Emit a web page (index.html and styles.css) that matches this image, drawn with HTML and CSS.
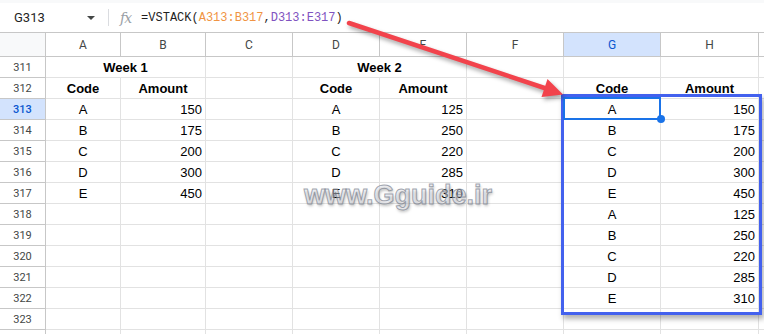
FILE: index.html
```html
<!DOCTYPE html>
<html>
<head>
<meta charset="utf-8">
<link rel="stylesheet" href="styles.css">
</head>
<body>
<div class="page">
  <div class="topband"></div>
  <div class="fbar">
    <div class="namebox">G313</div>
    <div class="caret"></div>
    <div class="sep"></div>
    <div class="fx">fx</div>
    <div class="formula">=VSTACK(<span class="ref1">A313:B317</span>,<span class="ref2">D313:E317</span>)</div>
  </div>
  <div class="sheet">
    <div class="ch corner"></div>
    <div class="ch">A</div><div class="ch">B</div><div class="ch">C</div><div class="ch">D</div>
    <div class="ch">E</div><div class="ch">F</div><div class="ch sel">G</div><div class="ch">H</div><div class="ch last"></div>

    <div class="rh">311</div>
    <div class="c ctr b span2">Week 1</div><div class="c"></div>
    <div class="c ctr b span2">Week 2</div><div class="c"></div><div class="c"></div><div class="c"></div><div class="c last"></div>

    <div class="rh">312</div>
    <div class="c ctr b">Code</div><div class="c ctr b">Amount</div><div class="c"></div>
    <div class="c ctr b">Code</div><div class="c ctr b">Amount</div><div class="c"></div>
    <div class="c ctr b">Code</div><div class="c ctr b">Amount</div><div class="c last"></div>

    <div class="rh sel">313</div>
    <div class="c ctr">A</div><div class="c num">150</div><div class="c"></div>
    <div class="c ctr">A</div><div class="c num">125</div><div class="c"></div>
    <div class="c ctr">A</div><div class="c num">150</div><div class="c last"></div>

    <div class="rh">314</div>
    <div class="c ctr">B</div><div class="c num">175</div><div class="c"></div>
    <div class="c ctr">B</div><div class="c num">250</div><div class="c"></div>
    <div class="c ctr">B</div><div class="c num">175</div><div class="c last"></div>

    <div class="rh">315</div>
    <div class="c ctr">C</div><div class="c num">200</div><div class="c"></div>
    <div class="c ctr">C</div><div class="c num">220</div><div class="c"></div>
    <div class="c ctr">C</div><div class="c num">200</div><div class="c last"></div>

    <div class="rh">316</div>
    <div class="c ctr">D</div><div class="c num">300</div><div class="c"></div>
    <div class="c ctr">D</div><div class="c num">285</div><div class="c"></div>
    <div class="c ctr">D</div><div class="c num">300</div><div class="c last"></div>

    <div class="rh">317</div>
    <div class="c ctr">E</div><div class="c num">450</div><div class="c"></div>
    <div class="c ctr">E</div><div class="c num">310</div><div class="c"></div>
    <div class="c ctr">E</div><div class="c num">450</div><div class="c last"></div>

    <div class="rh">318</div>
    <div class="c"></div><div class="c"></div><div class="c"></div><div class="c"></div><div class="c"></div><div class="c"></div>
    <div class="c ctr">A</div><div class="c num">125</div><div class="c last"></div>

    <div class="rh">319</div>
    <div class="c"></div><div class="c"></div><div class="c"></div><div class="c"></div><div class="c"></div><div class="c"></div>
    <div class="c ctr">B</div><div class="c num">250</div><div class="c last"></div>

    <div class="rh">320</div>
    <div class="c"></div><div class="c"></div><div class="c"></div><div class="c"></div><div class="c"></div><div class="c"></div>
    <div class="c ctr">C</div><div class="c num">220</div><div class="c last"></div>

    <div class="rh">321</div>
    <div class="c"></div><div class="c"></div><div class="c"></div><div class="c"></div><div class="c"></div><div class="c"></div>
    <div class="c ctr">D</div><div class="c num">285</div><div class="c last"></div>

    <div class="rh">322</div>
    <div class="c"></div><div class="c"></div><div class="c"></div><div class="c"></div><div class="c"></div><div class="c"></div>
    <div class="c ctr">E</div><div class="c num">310</div><div class="c last"></div>

    <div class="rh">323</div>
    <div class="c"></div><div class="c"></div><div class="c"></div><div class="c"></div><div class="c"></div><div class="c"></div>
    <div class="c"></div><div class="c"></div><div class="c last"></div>

    <div class="rh"></div>
    <div class="c"></div><div class="c"></div><div class="c"></div><div class="c"></div><div class="c"></div><div class="c"></div>
    <div class="c"></div><div class="c"></div><div class="c last"></div>
  </div>

  <div class="selrange"></div>
  <div class="active"></div>
  <div class="handle"></div>
  <div class="watermark">www.Gguide.ir</div>
  <svg class="arrow" width="764" height="334" viewBox="0 0 764 334">
    <line x1="349" y1="23" x2="546" y2="88.5" stroke="#f2434c" stroke-width="4.5" stroke-linecap="round"/>
    <polygon points="563,94.5 541.5,97 547.5,79" fill="#f2434c"/>
  </svg>
</div>
</body>
</html>
```
FILE: styles.css
```css
html, body {
  margin: 0;
  padding: 0;
  background: #ffffff;
}
.page {
  position: relative;
  width: 764px;
  height: 334px;
  overflow: hidden;
  font-family: "Liberation Sans", Arial, sans-serif;
}
.topband {
  height: 3px;
  background: #f8f9fa;
}
.fbar {
  height: 29px;
  border-bottom: 1px solid #c7c7c7;
  display: flex;
  align-items: center;
  box-sizing: content-box;
}
.namebox {
  font-family: "Roboto", "Liberation Sans", sans-serif;
  font-size: 13px;
  color: #1f1f1f;
  margin-left: 14px;
  width: 72px;
}
.caret {
  width: 0;
  height: 0;
  border-left: 4px solid transparent;
  border-right: 4px solid transparent;
  border-top: 4px solid #444746;
  margin-left: 1px;
}
.sep {
  width: 1px;
  height: 17px;
  background: #dadce0;
  margin-left: 13px;
}
.fx {
  font-family: "DejaVu Serif", "Liberation Serif", serif;
  font-style: italic;
  font-size: 14px;
  color: #9aa0a6;
  margin-left: 11px;
  letter-spacing: -1px;
}
.formula {
  font-family: "Liberation Mono", "DejaVu Sans Mono", monospace;
  font-size: 12px;
  color: #1f1f1f;
  margin-left: 10px;
}
.ref1 { color: #f09443; }
.ref2 { color: #8053c0; }

.sheet {
  display: grid;
  grid-template-columns: 46px 75px 85px 87px 87px 87px 97px 97px 98px 5px;
  grid-auto-rows: 21px;
  grid-template-rows: 24px;
}
.ch {
  box-sizing: border-box;
  border-right: 1px solid #c7c7c7;
  border-bottom: 1px solid #c7c7c7;
  display: flex;
  align-items: center;
  justify-content: center;
  font-family: "Roboto", "Liberation Sans", sans-serif;
  font-size: 12px;
  color: #444746;
  background: #ffffff;
}
.ch.corner { background: #f8f9fa; }
.ch.sel { background: #d3e3fd; color: #0b57d0; }
.ch.last { border-right: none; }
.rh {
  box-sizing: border-box;
  border-right: 1px solid #c7c7c7;
  border-bottom: 1px solid #c7c7c7;
  display: flex;
  align-items: center;
  justify-content: center;
  font-family: "Roboto", "Liberation Sans", sans-serif;
  font-size: 11px;
  color: #444746;
  background: #ffffff;
}
.rh.sel { background: #d3e3fd; color: #0b57d0; font-weight: 500; }
.c {
  box-sizing: border-box;
  border-right: 1px solid #e2e2e2;
  border-bottom: 1px solid #e2e2e2;
  display: flex;
  align-items: center;
  padding: 0 3px;
  font-size: 13px;
  color: #000000;
  white-space: nowrap;
}
.c.last { border-right: none; }
.ctr { justify-content: center; }
.num { justify-content: flex-end; }
.b { font-weight: bold; }
.span2 { grid-column: span 2; }

.selrange {
  position: absolute;
  left: 561px;
  top: 94px;
  width: 201px;
  height: 221px;
  box-sizing: border-box;
  border: 3px solid #4361ee;
  box-shadow: 2px 4px 5px rgba(0, 0, 0, 0.3);
}
.active {
  position: absolute;
  left: 563px;
  top: 97px;
  width: 98px;
  height: 23px;
  box-sizing: border-box;
  border: 2px solid #1a73e8;
}
.handle {
  position: absolute;
  left: 657px;
  top: 115px;
  width: 8px;
  height: 8px;
  border-radius: 50%;
  background: #1a73e8;
}
.watermark {
  position: absolute;
  left: 304px;
  top: 180px;
  font-family: "Liberation Sans", Arial, sans-serif;
  font-weight: bold;
  font-size: 27px;
  color: rgba(232, 234, 242, 0.45);
  -webkit-text-stroke: 1px rgba(120, 126, 140, 0.7);
  text-shadow: 1px 2px 3px rgba(0, 0, 0, 0.25);
  letter-spacing: 0px;
}
.arrow {
  position: absolute;
  left: 0;
  top: 0;
  filter: drop-shadow(2px 3px 2px rgba(0, 0, 0, 0.35));
  pointer-events: none;
}
```
